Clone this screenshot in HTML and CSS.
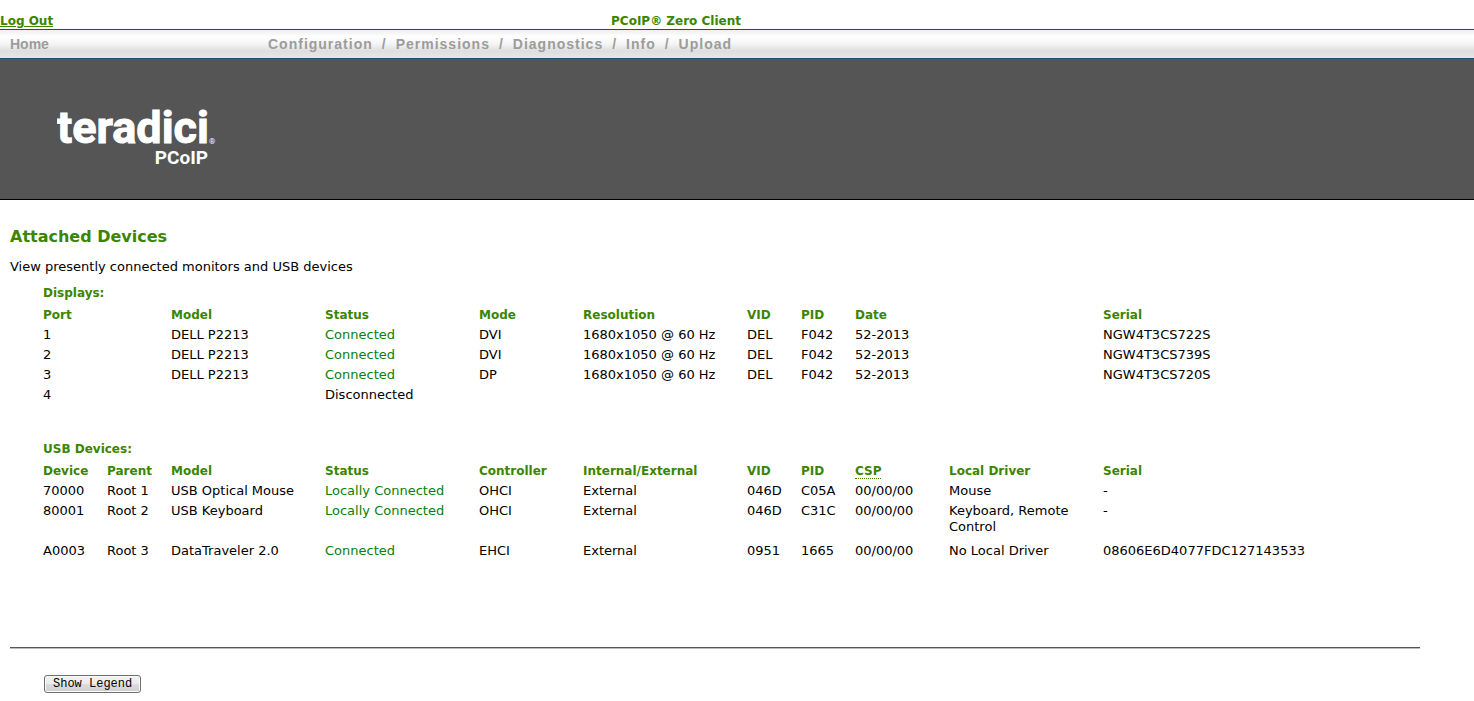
FILE: index.html
```html
<!DOCTYPE html>
<html lang="en">
<head>
<meta charset="utf-8">
<title>PCoIP® Zero Client</title>
<link rel="stylesheet" href="styles.css">
</head>
<body>
<header>
  <div class="topbar">
    <a class="logout" href="#">Log Out</a>
    <span class="product">PCoIP® Zero Client</span>
  </div>
  <nav class="menu">
    <a class="home" href="#">Home</a>
    <div class="menu-items">
      <a href="#">Configuration</a><span>/</span>
      <a href="#">Permissions</a><span>/</span>
      <a href="#">Diagnostics</a><span>/</span>
      <a href="#">Info</a><span>/</span>
      <a href="#">Upload</a>
    </div>
  </nav>
  <div class="banner">
    <svg class="logo" width="164" height="64" viewBox="0 0 164 64" role="img" aria-label="teradici PCoIP">
      <text class="logo-name" x="0" y="40">teradici</text>
      <text class="logo-reg" x="152" y="41">®</text>
      <text class="logo-sub" x="151" y="61">PCoIP</text>
    </svg>
  </div>
</header>
<main>
  <h1>Attached Devices</h1>
  <p class="intro">View presently connected monitors and USB devices</p>

  <section class="group">
    <h2>Displays:</h2>
    <table>
      <colgroup><col class="w128"><col class="w154"><col class="w154"><col class="w104"><col class="w164"><col class="w54"><col class="w54"><col class="w248"><col></colgroup>
      <thead><tr><th>Port</th><th>Model</th><th>Status</th><th>Mode</th><th>Resolution</th><th>VID</th><th>PID</th><th>Date</th><th>Serial</th></tr></thead>
      <tbody>
        <tr><td>1</td><td>DELL P2213</td><td class="ok">Connected</td><td>DVI</td><td>1680x1050 @ 60 Hz</td><td>DEL</td><td>F042</td><td>52-2013</td><td>NGW4T3CS722S</td></tr>
        <tr><td>2</td><td>DELL P2213</td><td class="ok">Connected</td><td>DVI</td><td>1680x1050 @ 60 Hz</td><td>DEL</td><td>F042</td><td>52-2013</td><td>NGW4T3CS739S</td></tr>
        <tr><td>3</td><td>DELL P2213</td><td class="ok">Connected</td><td>DP</td><td>1680x1050 @ 60 Hz</td><td>DEL</td><td>F042</td><td>52-2013</td><td>NGW4T3CS720S</td></tr>
        <tr><td>4</td><td></td><td>Disconnected</td><td></td><td></td><td></td><td></td><td></td><td></td></tr>
      </tbody>
    </table>
  </section>

  <section class="group usb">
    <h2>USB Devices:</h2>
    <table>
      <colgroup><col class="w64"><col class="w64"><col class="w154"><col class="w154"><col class="w104"><col class="w164"><col class="w54"><col class="w54"><col class="w94"><col class="w154"><col></colgroup>
      <thead><tr><th>Device</th><th>Parent</th><th>Model</th><th>Status</th><th>Controller</th><th>Internal/External</th><th>VID</th><th>PID</th><th><abbr>CSP</abbr></th><th>Local Driver</th><th>Serial</th></tr></thead>
      <tbody>
        <tr><td>70000</td><td>Root 1</td><td>USB Optical Mouse</td><td class="ok">Locally Connected</td><td>OHCI</td><td>External</td><td>046D</td><td>C05A</td><td>00/00/00</td><td>Mouse</td><td>-</td></tr>
        <tr class="tall"><td>80001</td><td>Root 2</td><td>USB Keyboard</td><td class="ok">Locally Connected</td><td>OHCI</td><td>External</td><td>046D</td><td>C31C</td><td>00/00/00</td><td>Keyboard, Remote Control</td><td>-</td></tr>
        <tr><td>A0003</td><td>Root 3</td><td>DataTraveler 2.0</td><td class="ok">Connected</td><td>EHCI</td><td>External</td><td>0951</td><td>1665</td><td>00/00/00</td><td>No Local Driver</td><td>08606E6D4077FDC127143533</td></tr>
      </tbody>
    </table>
  </section>

  <hr>
  <button class="legend" type="button">Show Legend</button>
</main>
</body>
</html>
```

FILE: styles.css
```css
body {
  margin: 0;
  background: #fff;
  color: #000;
  font: 13px/16px Verdana, "DejaVu Sans", sans-serif;
}

.topbar {
  display: grid;
  grid-template-columns: 1fr auto 1fr;
  padding-top: 13px;
  font-size: 12px;
  font-weight: bold;
  color: #3b8500;
}

.logout {
  color: inherit;
}

.product {
  margin-right: 122px;
}

.menu {
  display: flex;
  align-items: center;
  height: 28px;
  padding-left: 10px;
  border-top: 1px solid #1d5058;
  border-bottom: 1px solid #1d5566;
  background: linear-gradient(#eef0ec, #fff 25%, #f4f4f4 50%, #dedede 75%, #e6e6e6);
  font: bold 14px/16px Arial, "Liberation Sans", sans-serif;
  color: #9c9c9c;
}

.menu a {
  color: inherit;
  text-decoration: none;
}

.home {
  width: 258px;
}

.menu-items {
  display: flex;
  gap: 9px;
  letter-spacing: 1px;
}

.banner {
  padding: 44px 57px 32px;
  border-bottom: 1px solid #000;
  background: #555;
}

.logo {
  display: block;
  fill: #fff;
  font-family: Roboto, sans-serif;
  font-weight: bold;
}

.logo-name {
  font-size: 45px;
  stroke: #fff;
  stroke-width: 1px;
}

.logo-reg {
  font-size: 8px;
  font-weight: normal;
}

.logo-sub {
  font-size: 19px;
  text-anchor: end;
}

main {
  padding: 27px 54px 8px 10px;
}

h1 {
  margin: 0;
  font-size: 16px;
  line-height: 20px;
  color: #3b8500;
}

.intro {
  margin: 12px 0 10px;
}

.group {
  margin-left: 33px;
}

.usb {
  margin-top: 36px;
}

h2 {
  margin: 0 0 4px;
  font-size: 12px;
  line-height: 16px;
  color: #3b8500;
}

table {
  width: 100%;
  min-width: 1300px;
  table-layout: fixed;
  border-collapse: collapse;
}

th,
td {
  height: 16px;
  padding: 2px 10px 2px 0;
  text-align: left;
  vertical-align: top;
}

th {
  padding-right: 0;
  font-size: 12px;
  color: #3b8500;
}

td {
  white-space: nowrap;
}

.tall td {
  height: 36px;
  white-space: normal;
}

.ok {
  color: #08800c;
}

abbr {
  border-bottom: 1px dotted #3b8500;
}

.w54 { width: 54px; }
.w64 { width: 64px; }
.w94 { width: 94px; }
.w104 { width: 104px; }
.w128 { width: 128px; }
.w154 { width: 154px; }
.w164 { width: 164px; }
.w248 { width: 248px; }

hr {
  height: 1px;
  margin: 86px 0 26px;
  border: 0;
  border-bottom: 1px solid #bbb;
  background: #555;
}

.legend {
  display: block;
  margin-left: 34px;
  padding: 0 8px;
  border: 1px solid #707070;
  border-radius: 3px;
  background: linear-gradient(#f2f2f2, #ebebeb 50%, #dddddd 50%, #cfcfcf);
  box-shadow: inset 0 0 0 1px #fafafa;
  color: #000;
  font: 12px/16px "Courier New", "Liberation Mono", monospace;
}
```
